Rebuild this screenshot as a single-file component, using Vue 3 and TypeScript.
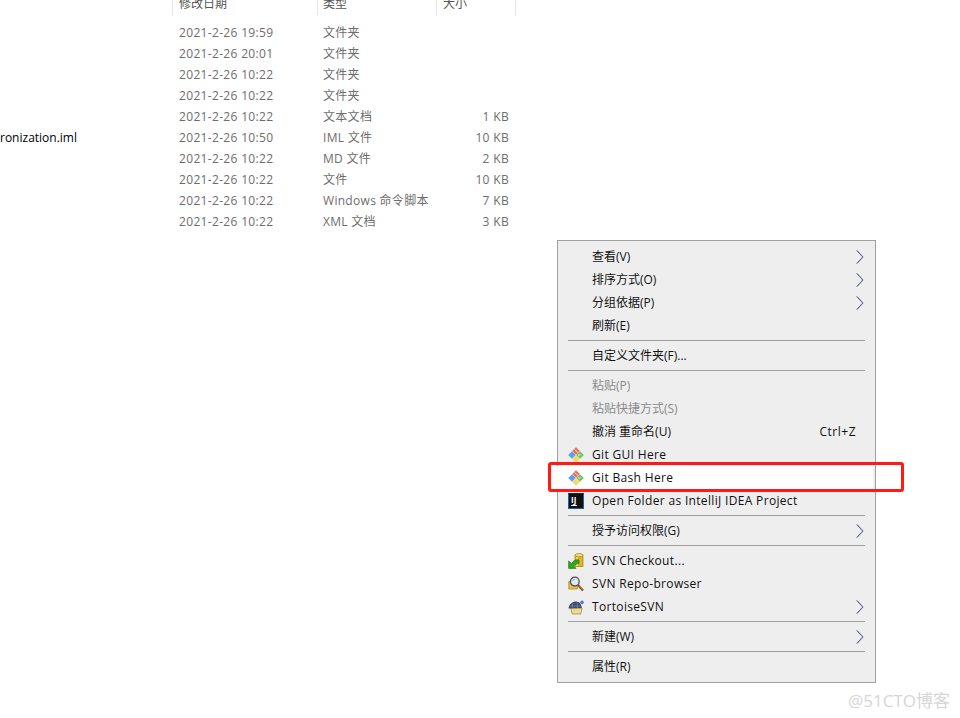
<script setup lang="ts">
type FileRow = { date: string; kind: string; size: string; name?: string }
type MenuItem = {
  label?: string
  sep?: boolean
  arrow?: boolean
  disabled?: boolean
  hint?: string
  icon?: string
  active?: boolean
}

const files: FileRow[] = [
  { date: '2021-2-26 19:59', kind: '文件夹', size: '' },
  { date: '2021-2-26 20:01', kind: '文件夹', size: '' },
  { date: '2021-2-26 10:22', kind: '文件夹', size: '' },
  { date: '2021-2-26 10:22', kind: '文件夹', size: '' },
  { date: '2021-2-26 10:22', kind: '文本文档', size: '1 KB' },
  { date: '2021-2-26 10:50', kind: 'IML 文件', size: '10 KB', name: 'ronization.iml' },
  { date: '2021-2-26 10:22', kind: 'MD 文件', size: '2 KB' },
  { date: '2021-2-26 10:22', kind: '文件', size: '10 KB' },
  { date: '2021-2-26 10:22', kind: 'Windows 命令脚本', size: '7 KB' },
  { date: '2021-2-26 10:22', kind: 'XML 文档', size: '3 KB' },
]

const menu: MenuItem[] = [
  { label: '查看(V)', arrow: true },
  { label: '排序方式(O)', arrow: true },
  { label: '分组依据(P)', arrow: true },
  { label: '刷新(E)' },
  { sep: true },
  { label: '自定义文件夹(F)...' },
  { sep: true },
  { label: '粘贴(P)', disabled: true },
  { label: '粘贴快捷方式(S)', disabled: true },
  { label: '撤消 重命名(U)', hint: 'Ctrl+Z' },
  { label: 'Git GUI Here', icon: 'git' },
  { label: 'Git Bash Here', icon: 'git', active: true },
  { label: 'Open Folder as IntelliJ IDEA Project', icon: 'idea' },
  { sep: true },
  { label: '授予访问权限(G)', arrow: true },
  { sep: true },
  { label: 'SVN Checkout...', icon: 'checkout' },
  { label: 'SVN Repo-browser', icon: 'repo' },
  { label: 'TortoiseSVN', icon: 'tortoise', arrow: true },
  { sep: true },
  { label: '新建(W)', arrow: true },
  { sep: true },
  { label: '属性(R)' },
]

const isLatin = (s?: string) => /^[\x00-\x7f]+$/.test(s ?? '')
</script>

<template>
  <div class="page">
    <div class="head">
      <span class="col-date">修改日期</span>
      <span class="col-kind">类型</span>
      <span class="col-size">大小</span>
    </div>
    <div class="list">
      <div v-for="(f, i) in files" :key="i" class="file">
        <span class="col-name">{{ f.name }}</span>
        <span class="col-date">{{ f.date }}</span>
        <span class="col-kind">{{ f.kind }}</span>
        <span class="col-size">{{ f.size }}</span>
      </div>
    </div>

    <div class="menu">
      <template v-for="(m, i) in menu" :key="i">
        <div v-if="m.sep" class="sep"></div>
        <div v-else class="item" :class="{ disabled: m.disabled, active: m.active }">
          <span class="ico">
            <svg v-if="m.icon === 'git'" width="16" height="16" viewBox="0 0 16 16">
              <path d="M8 .2 11.8 4 8 7.8 4.2 4Z" fill="#e8705c" />
              <path d="M6.6 2.4 9.6 5.4" stroke="#fbe3de" stroke-width="1" />
              <path d="M4 4.2 7.8 8 4 11.8 .2 8Z" fill="#5fa0e8" />
              <path d="M12 4.2 15.8 8 12 11.8 8.2 8Z" fill="#78c060" />
              <path d="M10 8H12.6" stroke="#e6f5df" stroke-width="1" />
              <path d="M8 8.2 11.8 12 8 15.8 4.2 12Z" fill="#f5d96a" />
            </svg>
            <svg v-else-if="m.icon === 'checkout'" width="16" height="16" viewBox="0 0 16 16">
              <path d="M7 2h8v11.5H7Z" fill="#e6b422" stroke="#a87a10" stroke-width=".7" />
              <path d="M9 3v10" stroke="#f7e08a" stroke-width="1.4" />
              <ellipse cx="11" cy="2.2" rx="4" ry="1.7" fill="#f7de7a" stroke="#a87a10" stroke-width=".7" />
              <path d="M.6 8v7.4H8L5.8 13C7 11.2 9 10.4 11 10.6V6.8C7.6 6.2 5 7.8 3.4 10.4Z" fill="#2fa81f" stroke="#156b10" stroke-width=".6" />
            </svg>
            <svg v-else-if="m.icon === 'repo'" width="16" height="16" viewBox="0 0 16 16">
              <path d="M.8 5.5h8.5v7.5H.8Z" fill="#eec04a" stroke="#a87a10" stroke-width=".7" />
              <circle cx="6.8" cy="5.6" r="4.4" fill="#dfe9f5" stroke="#4f4f4f" stroke-width="1.3" />
              <path d="M4.5 5C5 4 6 3.4 7 3.4" fill="none" stroke="#7ba4d4" stroke-width="1" />
              <path d="M10 9 15 14.6" stroke="#7a4a1c" stroke-width="2.2" />
              <path d="M11 9.6 14.6 13.6" stroke="#e4a95a" stroke-width=".7" />
            </svg>
            <svg v-else-if="m.icon === 'tortoise'" width="16" height="16" viewBox="0 0 16 16">
              <path d="M2.6 9h11.6L12.8 15H4.2Z" fill="#efd98c" stroke="#8c7630" stroke-width=".6" />
              <path d="M.4 9.6C1.4 4.6 4.6 2.6 8 2.6c3 0 5.2 2 5.8 6.4Z" fill="#3e4a6a" />
              <path d="M2.5 7h10M5 3.6 4 9.4M9 3 9.6 9.4" stroke="#8490b0" stroke-width=".6" />
              <circle cx="14" cy="3.4" r="1.8" fill="#4f7fc4" />
            </svg>
            <span v-else-if="m.icon === 'idea'" class="idea">
              <span class="idea-text">IJ</span>
              <span class="idea-line"></span>
            </span>
          </span>
          <span class="label" :class="isLatin(m.label) ? 'latin' : 'cjk'">{{ m.label }}</span>
          <span v-if="m.hint" class="hint">{{ m.hint }}</span>
          <svg v-if="m.arrow" class="arrow" width="8" height="14" viewBox="0 0 8 14">
            <path d="M.7 .5 6.7 7 .7 13.5" fill="none" stroke="#8a4a3a" stroke-width=".9" />
            <path d="M1.2 .5 7.2 7 1.2 13.5" fill="none" stroke="#3f78b8" stroke-width=".8" />
          </svg>
        </div>
      </template>
    </div>
    <div class="mark"></div>
    <div class="watermark">@51CTO博客</div>
  </div>
</template>

<style>
body {
  background: #fff;
}
</style>

<style scoped>
.page {
  position: relative;
  width: 960px;
  height: 718px;
  overflow: hidden;
  background: #fff;
  font-family: "Open Sans", "Noto Sans CJK SC", sans-serif;
  font-size: 12px;
}

.head {
  display: flex;
  height: 15px;
  margin-left: 172px;
  line-height: 7px;
  color: #555;
}
.head span {
  height: 15px;
  padding-left: 6px;
  border-left: 1px solid #e5e5e5;
  box-sizing: border-box;
}
.head .col-date {
  width: 145px;
}
.head .col-kind {
  width: 119px;
  padding-left: 5px;
}
.head .col-size {
  width: 80px;
  border-right: 1px solid #e5e5e5;
}

.list {
  margin-top: 7px;
}
.file {
  display: flex;
  height: 21px;
  line-height: 21px;
  color: #6d6d6d;
}
.col-name {
  width: 179px;
  color: #000;
}
.file .col-date {
  width: 144px;
  letter-spacing: 0.33px;
}
.file .col-kind {
  width: 130px;
  letter-spacing: 0.3px;
}
.file .col-size {
  width: 56px;
  text-align: right;
  letter-spacing: 0.33px;
}

.menu {
  position: absolute;
  left: 557px;
  top: 240px;
  width: 319px;
  box-sizing: border-box;
  padding: 4px 0;
  background: #eee;
  border: 1px solid #a0a0a0;
  color: #111;
}
.item {
  display: flex;
  align-items: center;
  height: 23px;
  padding-right: 10px;
}
.item.active {
  margin: 0 2px 0 -1px;
  padding-left: 1px;
  padding-right: 8px;
  background: #fff;
}
.item.disabled {
  color: #8a8a8a;
}
.ico {
  display: flex;
  justify-content: center;
  width: 34px;
  padding-left: 2px;
  box-sizing: border-box;
}
.label {
  flex: 1;
}
.label.latin {
  letter-spacing: 0.33px;
}
.label.cjk {
  padding-bottom: 2px;
}
.hint {
  margin-right: 9px;
  letter-spacing: 0.5px;
}
.arrow {
  margin-right: 1px;
}
.sep {
  height: 1px;
  margin: 3px 10px 3px 10px;
  background: #a0a0a0;
}
.idea {
  display: flex;
  flex-direction: column;
  width: 16px;
  height: 16px;
  padding: 1px 2px;
  box-sizing: border-box;
  background: #111;
  border: 1px solid #1f5fae;
  border-top-color: #222;
  color: #fff;
}
.idea-text {
  height: 9px;
  font-size: 8px;
  font-weight: 700;
  line-height: 9px;
}
.idea-line {
  width: 6px;
  height: 1px;
  margin-top: 1px;
  background: #fff;
}

.mark {
  position: absolute;
  left: 548px;
  top: 462px;
  width: 356px;
  height: 30px;
  box-sizing: border-box;
  border: 3px solid #ff1a16;
  border-radius: 3px;
}
.watermark {
  position: absolute;
  right: 10px;
  top: 690px;
  font-size: 17px;
  color: #d6d6d6;
  line-height: 22px;
}
</style>
